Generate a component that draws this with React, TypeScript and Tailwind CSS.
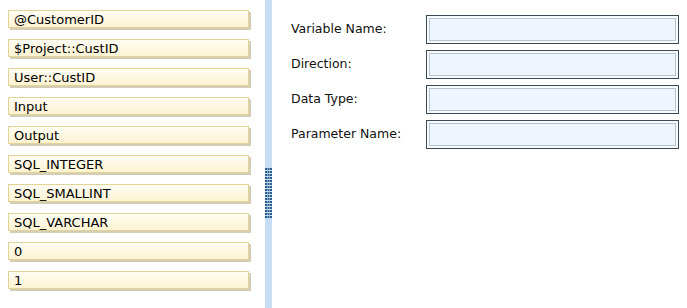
import React from "react";

const items = [
  "@CustomerID",
  "$Project::CustID",
  "User::CustID",
  "Input",
  "Output",
  "SQL_INTEGER",
  "SQL_SMALLINT",
  "SQL_VARCHAR",
  "0",
  "1",
];

const fields = ["Variable Name:", "Direction:", "Data Type:", "Parameter Name:"];

function Grip() {
  const rows = Array.from({ length: 17 });
  return (
    <svg width="7" height="51" viewBox="0 0 7 51">
      {rows.map((_, r) =>
        [0, 2.5, 5].map((x) => (
          <rect key={`${r}-${x}`} x={x} y={r * 3} width="2" height="2" fill="#2f5f8f" />
        ))
      )}
    </svg>
  );
}

export default function App() {
  return (
    <div className="flex w-[687px] h-[308px] bg-white overflow-hidden font-['DejaVu_Sans',sans-serif] text-black">
      <div className="w-[265px] shrink-0 flex flex-col gap-[11px] pt-[10px] pl-[8px] text-[13px]">
        {items.map((it) => (
          <div
            key={it}
            className="w-[241px] h-[18px] flex items-center pl-[5px] border border-[#e2d397] bg-gradient-to-b from-[#fffdf3] to-[#fdf3d2] shadow-[2px_2px_0_#d3ccb6] leading-none"
          >
            {it}
          </div>
        ))}
      </div>

      {/* splitter */}
      <div className="w-[7px] shrink-0 bg-[#c6ddf5] flex justify-center pt-[168px]">
        <Grip />
      </div>

      <div className="flex-1 flex flex-col gap-[6px] pt-[15px] pl-[19px] text-[12.5px]">
        {fields.map((f) => (
          <div key={f} className="flex items-center h-[29px]">
            <div className="w-[135px] shrink-0 text-[#111]">{f}</div>
            <div className="w-[253px] h-[29px] border border-[#3a4953] bg-[#f7fbff] p-[2px]">
              <div className="w-full h-full border border-[#b6c3cf] bg-[#eef5fd]" />
            </div>
          </div>
        ))}
      </div>
    </div>
  );
}
